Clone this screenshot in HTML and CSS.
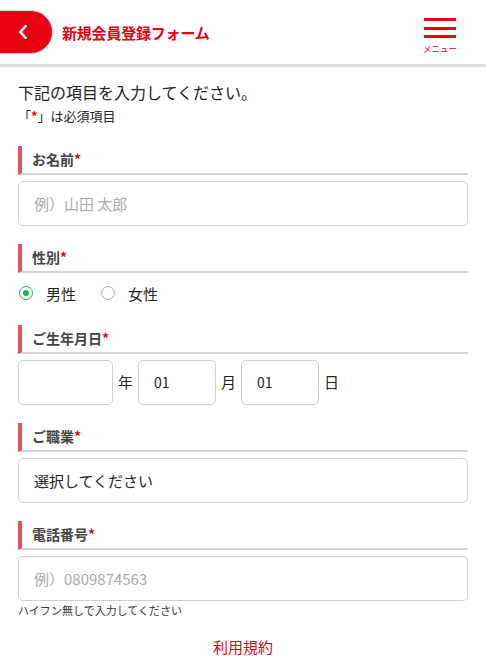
FILE: index.html
```html
<!DOCTYPE html>
<html lang="ja">
<head>
<meta charset="utf-8">
<title>新規会員登録フォーム</title>
<link rel="stylesheet" href="styles.css">
</head>
<body>
<header class="header">
  <a class="back" href="#" aria-label="戻る">
    <svg width="10" height="14" viewBox="0 0 10 14"><path d="M7.5 1.2 L2.4 7 L7.5 12.8" fill="none" stroke="#fff" stroke-width="2.6" stroke-linecap="round" stroke-linejoin="round"/></svg>
  </a>
  <h1 class="title">新規会員登録フォーム</h1>
  <div class="menu">
    <span class="bar"></span><span class="bar"></span><span class="bar"></span>
    <span class="menu-text">メニュー</span>
  </div>
</header>
<main class="main">
  <p class="lead">下記の項目を入力してください。</p>
  <p class="note">「<span class="req">*</span>」は必須項目</p>

  <section class="field">
    <div class="label">お名前<span class="req">*</span></div>
    <div class="input placeholder">例）山田 太郎</div>
  </section>

  <section class="field">
    <div class="label">性別<span class="req">*</span></div>
    <div class="radios">
      <span class="radio checked"></span><span class="radio-text">男性</span>
      <span class="radio"></span><span class="radio-text">女性</span>
    </div>
  </section>

  <section class="field">
    <div class="label">ご生年月日<span class="req">*</span></div>
    <div class="date">
      <div class="input year"></div><span class="unit">年</span>
      <div class="input small">01</div><span class="unit">月</span>
      <div class="input small">01</div><span class="unit">日</span>
    </div>
  </section>

  <section class="field">
    <div class="label">ご職業<span class="req">*</span></div>
    <div class="input value">選択してください</div>
  </section>

  <section class="field">
    <div class="label">電話番号<span class="req">*</span></div>
    <div class="input placeholder">例）0809874563</div>
    <p class="hint">ハイフン無しで入力してください</p>
  </section>

  <p class="terms">利用規約</p>
</main>
</body>
</html>
```

FILE: styles.css
```css
* { box-sizing: border-box; }
html, body { margin: 0; padding: 0; background: #fff; }
body {
  font-family: "Noto Sans CJK JP", "Noto Sans", "Liberation Sans", sans-serif;
  color: #222;
  width: 486px;
  height: 657px;
  overflow: hidden;
}
.header {
  height: 67px;
  display: flex;
  align-items: center;
  border-bottom: 3px solid #dcdcdc;
}
.back {
  width: 53px;
  height: 44px;
  margin-top: -1px;
  background: #e60012;
  border: 1px solid #cfe2e2;
  border-left: none;
  border-radius: 0 22px 22px 0;
  display: flex;
  align-items: center;
  justify-content: center;
  padding-right: 6px;
}
.title {
  margin: 0 0 0 9px;
  font-size: 15px;
  font-weight: 700;
  color: #e60012;
  letter-spacing: -0.2px;
}
.menu {
  margin-left: auto;
  margin-right: 30px;
  align-self: flex-start;
  margin-top: 18px;
  width: 32px;
  display: flex;
  flex-direction: column;
  align-items: center;
}
.bar {
  display: block;
  width: 32px;
  height: 3px;
  background: #e60012;
  margin-bottom: 5.5px;
}
.menu-text {
  font-size: 8.5px;
  line-height: 10px;
  color: #e60012;
  margin-top: -1px;
  white-space: nowrap;
}
.main { padding: 0 18px; }
.lead {
  margin: 13px 0 0;
  font-size: 16px;
  line-height: 24px;
  color: #222;
}
.note {
  margin: 0;
  font-size: 13px;
  line-height: 24px;
  color: #222;
}
.req { color: #e60012; font-weight: 700; }
.field { margin-top: 18px; }
.label {
  height: 29px;
  border-left: 4px solid #e8505b;
  border-bottom: 2px solid #d4d4d4;
  padding-left: 10px;
  font-size: 14px;
  line-height: 27px;
  font-weight: 700;
  color: #444;
}
.input {
  margin-top: 6px;
  height: 45px;
  border: 1px solid #cfcfcf;
  border-radius: 5px;
  padding-left: 15px;
  font-size: 15px;
  line-height: 43px;
}
.placeholder { color: #aaa; }
.value { color: #222; }
.radios {
  margin-top: 6px;
  height: 28px;
  display: flex;
  align-items: center;
  padding-left: 1px;
}
.radio {
  width: 14px;
  height: 14px;
  border-radius: 50%;
  border: 1.5px solid #aaa;
  position: relative;
  flex: none;
}
.radio.checked { border-color: #1fb35a; }
.radio.checked::after {
  content: "";
  position: absolute;
  left: 2.5px;
  top: 2.5px;
  width: 6px;
  height: 6px;
  border-radius: 50%;
  background: #1fb35a;
}
.radio-text {
  font-size: 15px;
  margin-left: 13px;
  margin-right: 25px;
  color: #222;
}
.date {
  display: flex;
  align-items: center;
}
.date .input { margin-top: 6px; }
.year { width: 95px; }
.small { width: 78px; font-size: 14px; }
.unit {
  font-size: 15px;
  margin: 0 5px;
  padding-top: 4px;
  color: #222;
}
.hint {
  margin: 2px 0 0;
  font-size: 11px;
  line-height: 14px;
  color: #333;
}
.terms {
  margin: 22px 0 0;
  text-align: center;
  font-size: 15px;
  line-height: 16px;
  color: #e60012;
}
```
